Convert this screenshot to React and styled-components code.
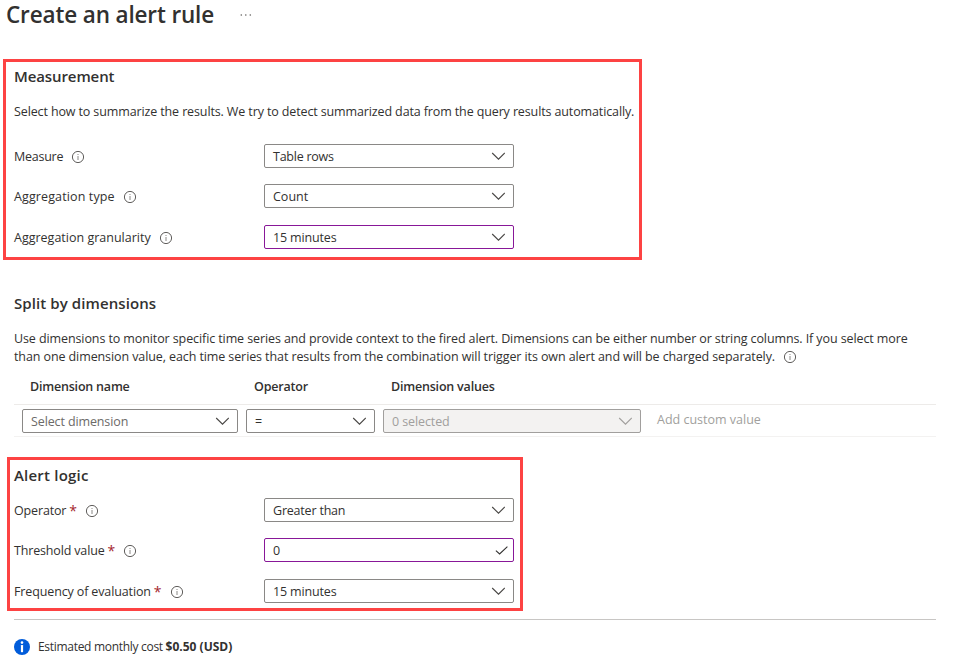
import React from "react";
import styled, { createGlobalStyle } from "styled-components";

const GlobalStyle = createGlobalStyle`
  * { box-sizing: border-box; }
  body {
    margin: 0;
    background: #fff;
    color: #323130;
    font-family: "Open Sans", "Noto Sans", sans-serif;
    font-size: 12.5px;
    line-height: 18px;
    overflow: hidden;
  }
`;

const Page = styled.main`
  width: 953px;
  height: 667px;
  display: flex;
  flex-direction: column;
  background: #fff;
`;

const Header = styled.header`
  display: flex;
  align-items: center;
  gap: 26px;
  height: 30px;
  padding-left: 6px;
  margin-bottom: 29px;
`;

const Title = styled.h1`
  margin: 0;
  font-size: 22.5px;
  line-height: 30px;
  font-weight: 600;
  letter-spacing: -0.14px;
  white-space: nowrap;
`;

const Highlight = styled.section`
  flex: none;
  width: ${(p) => p.$width}px;
  height: ${(p) => p.$height}px;
  margin: ${(p) => p.$top || 0}px 0 0 ${(p) => p.$left}px;
  padding: ${(p) => p.$padding};
  border: 3px solid #fd4343;
`;

const Heading = styled.h2`
  margin: 0;
  font-size: 15px;
  line-height: 22px;
  font-weight: 600;
  letter-spacing: ${(p) => p.$spacing || 0}px;
  white-space: nowrap;
`;

const Text = styled.span`
  white-space: nowrap;
  letter-spacing: ${(p) => p.$spacing || 0}px;
`;

const Lead = styled.p`
  margin: 16px 0 23px;
  letter-spacing: -0.123px;
  white-space: nowrap;
`;

const Fields = styled.div`
  display: grid;
  grid-template-rows: 24px 24px 24px;
  row-gap: 16px;
  margin-top: ${(p) => p.$top || 0}px;
`;

const Field = styled.div`
  display: grid;
  grid-template-columns: 250px 250px;
  align-items: center;
  height: 24px;
  margin-top: ${(p) => p.$offset || 0}px;
`;

const Label = styled.div`
  display: flex;
  align-items: center;
  padding-top: 2px;
  white-space: nowrap;

  svg { margin-left: 8px; }
`;

const Required = styled.span`
  margin-left: 3px;
  color: #a4262c;
  font-size: 14px;
  line-height: 18px;
`;

const Control = styled.div`
  display: flex;
  align-items: center;
  justify-content: space-between;
  flex: none;
  width: ${(p) => p.$width || 250}px;
  height: 24px;
  padding: 0 ${(p) => p.$right || 8}px 0 8px;
  border: 1px solid ${(p) => (p.$changed ? "#881798" : p.$disabled ? "#a19f9d" : "#8a8886")};
  border-radius: 2px;
  background: ${(p) => (p.$disabled ? "#f3f2f1" : "#fff")};
  color: ${(p) => (p.$disabled ? "#a19f9d" : p.$placeholder ? "#6c6a68" : "#323130")};
  white-space: nowrap;

  ${Text} { padding-top: 2px; }
`;

const Split = styled.section`
  margin: 32px 0 0 14px;
  width: 922px;
`;

const Description = styled.div`
  margin-top: 16px;
`;

const Line = styled.div`
  display: flex;
  align-items: center;
  height: 18px;
  white-space: nowrap;

  svg { margin-left: 8px; }
`;

const TableHead = styled.div`
  display: grid;
  grid-template-columns: 224px 137px 1fr;
  align-items: center;
  height: 39px;
  padding: 4px 0 0 16px;
  border-bottom: 1px solid #edebe9;
  font-weight: 600;
`;

const TableRow = styled.div`
  display: flex;
  align-items: center;
  gap: 8px;
  height: 32px;
  padding-left: 8px;
  border-bottom: 1px solid #f3f2f1;
`;

const AddValue = styled.span`
  margin: -2px 0 0 8px;
  color: #a19f9d;
  white-space: nowrap;
`;

const Footer = styled.footer`
  display: flex;
  align-items: center;
  gap: 8px;
  width: 922px;
  height: 48px;
  margin: 8px 0 0 14px;
  padding-top: 7px;
  border-top: 1px solid #c8c6c4;
  white-space: nowrap;
  font-size: 12px;
`;

const Strong = styled.strong`
  font-weight: 700;
`;

const InfoIcon = () => (
  <svg width="14" height="14" viewBox="0 0 14 14" fill="none">
    <circle cx="7" cy="7" r="5.6" stroke="#605e5c" />
    <path d="M7 6v4" stroke="#8a8886" />
    <path d="M7 4v1" stroke="#8a8886" />
  </svg>
);

const Chevron = ({ color = "#484644" }) => (
  <svg width="14" height="8" viewBox="0 0 14 8" fill="none">
    <path d="M1.2 1L7.5 7.2L13.8 1" stroke={color} strokeWidth="1.1" />
  </svg>
);

const Check = () => (
  <svg width="13" height="9" viewBox="0 0 13 9" fill="none">
    <path d="M0.9 4.7L4.6 8L12.4 0.6" stroke="#323130" strokeWidth="1.1" />
  </svg>
);

const MoreIcon = () => (
  <svg width="12" height="4" viewBox="0 0 12 4" fill="#605e5c">
    <circle cx="1.3" cy="2" r="0.8" />
    <circle cx="5.8" cy="2" r="0.8" />
    <circle cx="10.3" cy="2" r="0.8" />
  </svg>
);

const InfoBadge = () => (
  <svg width="16" height="16" viewBox="0 0 16 16">
    <circle cx="8" cy="8" r="8" fill="#015cda" />
    <circle cx="8" cy="3.6" r="1.3" fill="#fff" />
    <rect x="6.9" y="6" width="2.2" height="7.2" rx="0.6" fill="#fff" />
  </svg>
);

const FormField = ({ label, value, required, changed, valid, offset, labelSpacing, valueSpacing }) => (
  <Field $offset={offset}>
    <Label>
      <Text $spacing={labelSpacing}>{label}</Text>
      {required && <Required>*</Required>}
      <InfoIcon />
    </Label>
    <Control $changed={changed} $right={valid ? 5 : 8}>
      <Text $spacing={valueSpacing}>{value}</Text>
      {valid ? <Check /> : <Chevron />}
    </Control>
  </Field>
);

export default function App() {
  return (
    <Page>
      <GlobalStyle />
      <Header>
        <Title>Create an alert rule</Title>
        <MoreIcon />
      </Header>

      <Highlight $left={3} $width={639} $height={201} $padding="3px 0 0 8px">
        <Heading $spacing={-0.1}>Measurement</Heading>
        <Lead>
          Select how to summarize the results. We try to detect summarized data from the query results automatically.
        </Lead>
        <Fields>
          <FormField label="Measure" value="Table rows" labelSpacing={-0.25} valueSpacing={-0.25} />
          <FormField label="Aggregation type" value="Count" labelSpacing={0.12} />
          <FormField label="Aggregation granularity" value="15 minutes" valueSpacing={-0.15} changed offset={1} />
        </Fields>
      </Highlight>

      <Split>
        <Heading $spacing={0.09}>Split by dimensions</Heading>
        <Description>
          <Line>
            <Text $spacing={-0.1}>
              Use dimensions to monitor specific time series and provide context to the fired alert. Dimensions can be either number or string columns. If you select more
            </Text>
          </Line>
          <Line>
            <Text $spacing={-0.098}>
              than one dimension value, each time series that results from the combination will trigger its own alert and will be charged separately.
            </Text>
            <InfoIcon />
          </Line>
        </Description>
        <TableHead>
          <Text $spacing={-0.2}>Dimension name</Text>
          <Text $spacing={-0.2}>Operator</Text>
          <Text $spacing={-0.2}>Dimension values</Text>
        </TableHead>
        <TableRow>
          <Control $width={216} $placeholder>
            <Text $spacing={-0.12}>Select dimension</Text>
            <Chevron />
          </Control>
          <Control $width={129}>
            <Text>=</Text>
            <Chevron />
          </Control>
          <Control $width={258} $disabled>
            <Text $spacing={-0.1}>0 selected</Text>
            <Chevron color="#a19f9d" />
          </Control>
          <AddValue>Add custom value</AddValue>
        </TableRow>
      </Split>

      <Highlight $top={20} $left={7} $width={516} $height={154} $padding="4px 0 0 4px">
        <Heading $spacing={0.2}>Alert logic</Heading>
        <Fields $top={12}>
          <FormField label="Operator" value="Greater than" labelSpacing={-0.15} valueSpacing={-0.2} required />
          <FormField label="Threshold value" value="0" labelSpacing={-0.16} required changed valid />
          <FormField
            label="Frequency of evaluation"
            value="15 minutes"
            labelSpacing={-0.13}
            valueSpacing={-0.15}
            required
            offset={1}
          />
        </Fields>
      </Highlight>

      <Footer>
        <InfoBadge />
        <span>
          <Text $spacing={-0.3}>Estimated monthly cost </Text>
          <Strong>$0.50 (USD)</Strong>
        </span>
      </Footer>
    </Page>
  );
}
